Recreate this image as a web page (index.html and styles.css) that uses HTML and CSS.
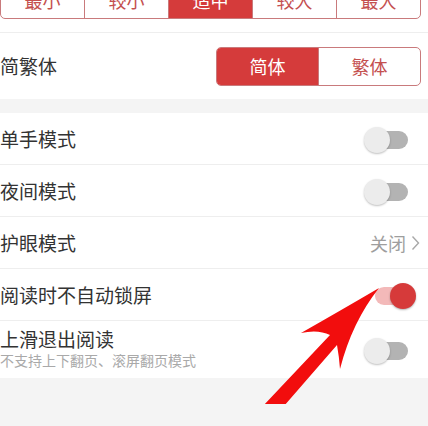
FILE: index.html
```html
<!DOCTYPE html>
<html lang="zh-CN">
<head>
<meta charset="utf-8">
<title>阅读设置</title>
<link rel="stylesheet" href="styles.css">
</head>
<body>
<div class="page">
  <section class="group">
    <div class="row row-size">
      <div class="seg seg-size">
        <span class="seg-item">最小</span>
        <span class="seg-item">较小</span>
        <span class="seg-item active">适中</span>
        <span class="seg-item">较大</span>
        <span class="seg-item">最大</span>
      </div>
    </div>
    <div class="row row-script">
      <span class="label">简繁体</span>
      <div class="seg seg-script">
        <span class="seg-item active">简体</span>
        <span class="seg-item">繁体</span>
      </div>
    </div>
  </section>

  <section class="group">
    <div class="row item">
      <span class="label">单手模式</span>
      <span class="toggle"><span class="track"></span><span class="knob"></span></span>
    </div>
    <div class="row item">
      <span class="label">夜间模式</span>
      <span class="toggle"><span class="track"></span><span class="knob"></span></span>
    </div>
    <div class="row item link">
      <span class="label">护眼模式</span>
      <span class="value">关闭
        <svg class="chev" width="9" height="16" viewBox="0 0 9 16"><path d="M1.5 1.5 L7.5 8 L1.5 14.5" fill="none" stroke="#a8a8a8" stroke-width="1.4"/></svg>
      </span>
    </div>
    <div class="row item">
      <span class="label">阅读时不自动锁屏</span>
      <span class="toggle on"><span class="track"></span><span class="knob"></span></span>
    </div>
    <div class="row item tall">
      <div class="text">
        <span class="label">上滑退出阅读</span>
        <span class="sub">不支持上下翻页、滚屏翻页模式</span>
      </div>
      <span class="toggle"><span class="track"></span><span class="knob"></span></span>
    </div>
  </section>

  <svg class="arrow" width="428" height="426" viewBox="0 0 428 426">
    <path d="M379 310 Q338 334 301 355 Q318 351 330 357 L263 428 L284 428 L337 367 Q339 378 340 391 Q352 344 379 310 Z" fill="#f20d0d"/>
  </svg>
</div>
</body>
</html>
```

FILE: styles.css
```css
* { box-sizing: border-box; }

html, body {
  margin: 0;
  height: 100%;
  overflow: hidden;
  background: #f4f4f4;
}

body {
  font-family: "Noto Sans CJK SC", "Noto Sans", sans-serif;
  color: #333;
}

.page {
  position: relative;
  width: 428px;
  height: 426px;
}

.page > .group:first-child {
  margin-top: -22px;
}

.group {
  background: #fff;
  margin-bottom: 14px;
}

.row {
  display: flex;
  align-items: center;
  justify-content: space-between;
  border-bottom: 1px solid #eeeeee;
  padding-right: 7px;
}

.group .row:last-child { border-bottom: none; }

.row-size {
  height: 55px;
  padding-top: 2px;
  align-items: flex-start;
}

.row-script {
  height: 66px;
}

.label {
  font-size: 19px;
  line-height: 24px;
  color: #333;
}

.seg {
  display: flex;
  border: 1px solid #c97a7c;
  border-radius: 5px;
  overflow: hidden;
}

.seg-item {
  display: flex;
  align-items: center;
  justify-content: center;
  color: #c4504f;
  font-size: 18px;
}

.seg-item + .seg-item { border-left: 1px solid #c97a7c; }

.seg-item.active {
  background: #d53b3b;
  color: #fff;
}

.seg-size {
  width: 421px;
  height: 39px;
}

.seg-size .seg-item { flex: 1; }

.seg-script {
  width: 205px;
  height: 39px;
}

.seg-script .seg-item { flex: 1; }

.item {
  height: 52px;
  padding-right: 12px;
}

.item.tall {
  height: 57px;
}

.item.link { padding-right: 8px; }

.text {
  display: flex;
  flex-direction: column;
}

.text .label { line-height: 24px; margin-top: -4px; }

.sub {
  font-size: 14px;
  line-height: 18px;
  color: #a9a9a9;
}

.value {
  display: flex;
  align-items: center;
  gap: 5px;
  font-size: 18px;
  color: #9e9e9e;
}

.toggle {
  position: relative;
  width: 52px;
  height: 26px;
  margin-top: 2px;
}

.toggle .track {
  position: absolute;
  left: 10px;
  right: 8px;
  top: 4px;
  height: 18px;
  border-radius: 9px;
  background: #b3b3b3;
}

.toggle .knob {
  position: absolute;
  left: 0;
  top: 0;
  width: 26px;
  height: 26px;
  border-radius: 50%;
  background: #ececec;
  box-shadow: 0 1px 2px rgba(0, 0, 0, 0.25);
}

.toggle.on .track { background: #f3b9b9; left: 11px; right: 10px; }

.toggle.on .knob {
  left: auto;
  right: 0;
  background: #d63a3a;
  box-shadow: 0 1px 2px rgba(0, 0, 0, 0.3);
}

.arrow {
  position: absolute;
  left: 0;
  top: 0;
  pointer-events: none;
}
```
